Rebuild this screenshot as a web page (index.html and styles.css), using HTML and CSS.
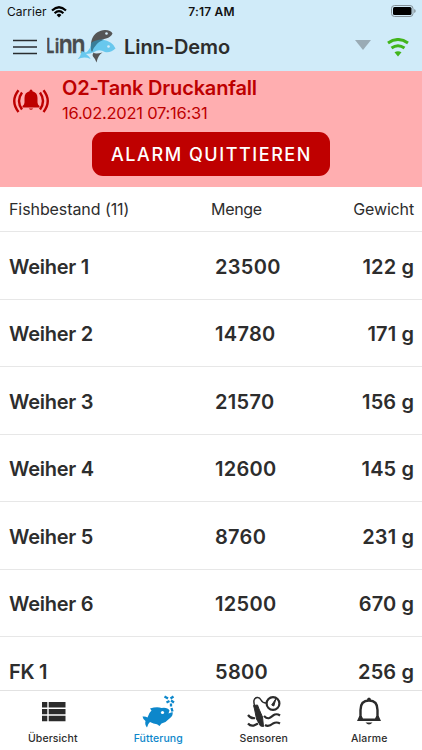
FILE: index.html
```html
<!DOCTYPE html>
<html lang="de">
<head>
<meta charset="utf-8">
<title>Linn-Demo</title>
<link rel="stylesheet" href="styles.css">
</head>
<body>
<div class="app">
  <header class="top">
    <div class="status">
      <div class="carrier"><span>Carrier</span>
        <svg width="16" height="12" viewBox="0 0 16 12" fill="none" stroke="#000" stroke-width="2.2"><path d="M1 4.5Q8-2 15 4.5M3.6 7.2Q8 3 12.4 7.2"/><path d="M5.6 8.9Q8 6.8 10.4 8.9L8 11.4Z" fill="#000" stroke="none"/></svg>
      </div>
      <span class="time">7:17 AM</span>
      <svg class="battery" width="25" height="12" viewBox="0 0 25 12"><rect x=".5" y=".5" width="21.5" height="11" rx="3" fill="none" stroke="#849198"/><rect x="2" y="2" width="18.5" height="8" rx="1.5"/><path d="M23.2 4Q24.7 4.5 24.7 6Q24.7 7.5 23.2 8Z" fill="#849198"/></svg>
    </div>
    <div class="bar">
      <svg class="menu" width="24" height="16" viewBox="0 0 24 16" stroke="#292d30" stroke-width="1.7"><path d="M0 1.5H24M0 8H24M0 14.5H24"/></svg>
      <svg class="logo" width="70" height="36" viewBox="0 0 70 36">
        <g class="wordmark"><text transform="translate(-.8 24.500) scale(.72 1)" font-size="20">L</text><text transform="translate(7.800 24.500) scale(.95 1)" font-size="18.5">i</text><text transform="translate(11.800 24.500) scale(.9 1)" font-size="25.500">n</text><text transform="translate(24.600 24.500) scale(.9 1)" font-size="25.500">n</text></g>
        <path fill="#68c8ee" d="M30.500 31.300Q34 28 34.500 23L39 24.500Q43 22 46 13Q50 11 55 11.500Q66 13.500 68.500 20.500Q64 25 58 24Q52 20.500 47 24Q43 26 39 26Q43 29 43.500 31Q37 28 30.500 31.300Z"/>
        <path fill="#555" d="M45 24C42 13 46 3 58 2Q64 2 65.500 5.500Q64 9 59 10.500C51 12 46 17 45 24Z"/>
        <path fill="#397e99" d="M45 24Q43 19 44 15Q49 11 57 11.500Q48 15 45 24Z"/>
        <path fill="#555" d="M46.500 24.500Q48 26.500 55.500 24.500Q51 27 49.500 34.500Q48.500 31 46 28.500Q45 27 46.500 24.500Z"/>
        <circle cx="59.500" cy="5.500" r="1.300" fill="#d5edf9"/><circle cx="61.500" cy="18.500" r="1.300" fill="#d5edf9"/>
      </svg>
      <h1>Linn-Demo</h1>
      <svg class="caret" width="16" height="10" viewBox="0 0 16 10"><path fill="#9aabb5" d="M0 0H16L8 10Z"/></svg>
      <svg class="signal" width="22" height="19" viewBox="0 0 22 19" fill="none" stroke="#42b51c" stroke-width="3"><path d="M1 5Q11-2 21 5M4.500 10Q11 5.500 17.500 10"/><path d="M7.500 14.300Q11 12 14.500 14.300L11 18.500Z" fill="#42b51c" stroke="none"/></svg>
    </div>
  </header>
  <section class="alarm">
    <div class="alarm-head">
      <svg width="38" height="26" viewBox="0 0 38 26" fill="none" stroke="#bd0000" stroke-width="2.400"><path d="M6.500 2.300Q-2 13 6.500 24M10 4.500Q4 13 10 21.500M31.500 2.300Q40 13 31.500 24M28 4.500Q34 13 28 21.500"/><path fill="#bd0000" stroke="none" d="M19 1.500Q20.500 1.500 20.500 3.200Q25.500 4.500 25.500 10V14.500Q25.500 16.500 27.500 18V19.500H10.500V18Q12.500 16.500 12.500 14.500V10Q12.500 4.500 17.500 3.200Q17.500 1.500 19 1.500ZM16.800 20.500H21.200Q19 23 16.800 20.500Z"/></svg>
      <div><h2>O2-Tank Druckanfall</h2><p>16.02.2021 07:16:31</p></div>
    </div>
    <button>ALARM QUITTIEREN</button>
  </section>
  <main>
    <div class="columns"><span class="c1">Fishbestand (11)</span><span class="c2">Menge</span><span class="c3">Gewicht</span></div>
    <div class="row"><b>Weiher 1</b><b>23500</b><b>122 g</b></div>
    <div class="row"><b>Weiher 2</b><b>14780</b><b>171 g</b></div>
    <div class="row"><b>Weiher 3</b><b>21570</b><b>156 g</b></div>
    <div class="row"><b>Weiher 4</b><b>12600</b><b>145 g</b></div>
    <div class="row"><b>Weiher 5</b><b>8760</b><b>231 g</b></div>
    <div class="row"><b>Weiher 6</b><b>12500</b><b>670 g</b></div>
    <div class="row"><b>FK 1</b><b>5800</b><b>256 g</b></div>
  </main>
  <nav>
    <div class="tab"><svg width="34" height="34" viewBox="0 0 34 34" fill="#2b2b2b"><path d="M6 7H11.300V12.500H6ZM12.700 7H29.500V12.500H12.700ZM6 14H11.300V19.200H6ZM12.700 14H29.500V19.200H12.700ZM6 20.800H11.300V26.300H6ZM12.700 20.800H29.500V26.300H12.700Z"/></svg><span>Übersicht</span></div>
    <div class="tab active"><svg width="34" height="34" viewBox="0 0 34 34" fill="#0d87cb"><path d="M1.500 21.500Q4.500 21 6.500 22.500Q8 17.500 10.500 15.500L9 13.500Q16 11.500 20.500 13Q26.500 12 28.500 15.500L27.500 18.500L31.500 17Q32.500 20.500 28.500 23.500Q25 27.500 20.500 28.500L18.500 31L16 29.300Q12.500 28.800 9 27Q7 28.500 6 32.500Q3.500 29.500 4.500 26Q2 24.500 1.500 21.500Z"/><circle cx="21.500" cy="17.500" r="1.600" fill="#fff"/><path fill="none" stroke="#0d87cb" stroke-width="2.300" d="M23.500 1.500L27 3.500M32.500 1.500L29.500 3.500M25.500 7.500L28.500 6M33 7.500L30 5.500M30 8.500V11.500M30.500 13L31.500 16.500"/></svg><span>Fütterung</span></div>
    <div class="tab"><svg width="34" height="34" viewBox="0 0 34 34" fill="none" stroke="#2b2b2b" stroke-width="1.800"><path stroke-width="1.500" d="M8 12Q5 3.500 10 2.500Q12.500 2 14 5Q15.500 8 19 8"/><path d="M6.500 10.500L10.500 10L12 14L15.500 22L16.500 31.500L13.500 31L9.500 24L7.500 14Z" fill="#2b2b2b" stroke-width="1"/><circle cx="26" cy="8.500" r="6.400" stroke-width="2.200"/><path fill="#2b2b2b" stroke-width="1" d="M24.700 10L29 3.500L26.800 11Z"/><path d="M1 20Q4 24 8 23M17 21C21 25 23 23 26 20.500Q29.500 18 33 20.500M1 28.500Q4 32 8 30L11 28.500M18 30C21 32 23 31 26 28.500Q29.500 26.500 33 28.500" stroke-width="2.200"/></svg><span>Sensoren</span></div>
    <div class="tab"><svg width="34" height="34" viewBox="0 0 34 34" fill="none" stroke="#2b2b2b" stroke-width="2.400"><path d="M8.500 23V15Q8.500 5.500 17 5.500Q25.500 5.500 25.500 15V23"/><path fill="#2b2b2b" stroke="none" d="M15 5Q15 2.500 17 2.500Q19 2.500 19 5ZM7.300 21H9.700L11 23.500H23L24.300 21H26.700L29 26H5ZM13.500 27.500H20.500Q17 31.500 13.500 27.500Z"/></svg><span>Alarme</span></div>
  </nav>
</div>
</body>
</html>
```
FILE: styles.css
```css
* { box-sizing: border-box; }
body, h1, h2, p { margin: 0; }
body { font-family: Inter, sans-serif; color: #2d2d2d; background: #fff; overflow: hidden; }
svg { display: block; flex: none; }
.app { width: 422px; height: 750px; display: flex; flex-direction: column; }
.top { height: 71px; flex: none; background: #d0ebf9; }
.status { height: 23px; padding: 0 6px 0 7px; display: grid; grid-template-columns: 1fr auto 1fr; align-items: center; font-size: 12px; color: #111; }
.carrier { display: flex; align-items: center; gap: 4px; letter-spacing: .05px; }
.time { font-weight: 600; font-size: 12px; letter-spacing: .2px; }
.battery { justify-self: end; margin-top: -2px; }
.bar { height: 48px; padding: 0 13px 0 13px; display: flex; align-items: center; }
.logo { margin: -3px 0 0 10px; }
.wordmark { font-weight: 600; fill: #484b4e; stroke: #484b4e; stroke-width: .3px; }
h1 { margin-left: 7px; font-size: 20px; line-height: 24px; font-weight: 600; letter-spacing: -.08px; }
.caret { margin-left: auto; margin-top: -4px; }
.signal { margin-left: 16px; }
.alarm { height: 116px; flex: none; background: #ffaeb0; color: #bd0000; display: flex; flex-direction: column; align-items: center; }
.alarm-head { width: 100%; height: 61px; padding: 5px 12px; display: flex; gap: 12px; }
.alarm-head svg { margin-top: 12px; }
h2 { font-size: 20px; line-height: 25px; font-weight: 600; letter-spacing: -.18px; }
.alarm p { font-size: 16.5px; line-height: 24px; letter-spacing: -.24px; }
button { width: 238px; height: 44px; border: 0; border-radius: 11px; padding: 0 0 0 1px; background: #bf0000; color: #fff; font: 500 18px Inter, sans-serif; letter-spacing: 1.55px; white-space: nowrap; }
main { flex: 1; min-height: 0; overflow: hidden; }
.columns, .row { padding: 0 8px 0 9px; display: flex; align-items: center; border-bottom: 1px solid #e7e7e7; }
.columns { height: 45px; font-size: 16px; letter-spacing: -.15px; }
.c1 { width: 202px; letter-spacing: -.08px; }
.c2 { letter-spacing: -.3px; }
.c3 { margin-left: auto; }
.row { height: 67.5px; padding-top: 2.5px; font-size: 20px; letter-spacing: .3px; }
.row b { font-weight: 600; }
.row b:first-child { width: 206px; letter-spacing: -.25px; }
.row b:last-child { margin-left: auto; letter-spacing: .1px; }
nav { height: 60px; flex: none; border-top: 1px solid #e2e2e2; background: #fff; display: grid; grid-template-columns: repeat(4, 1fr); }
.tab { display: flex; flex-direction: column; align-items: center; padding-top: 4px; font-size: 10.5px; font-weight: 500; letter-spacing: .1px; }
.tab span { line-height: 14px; margin-top: 3px; }
.active { color: #0d87cb; }
```
